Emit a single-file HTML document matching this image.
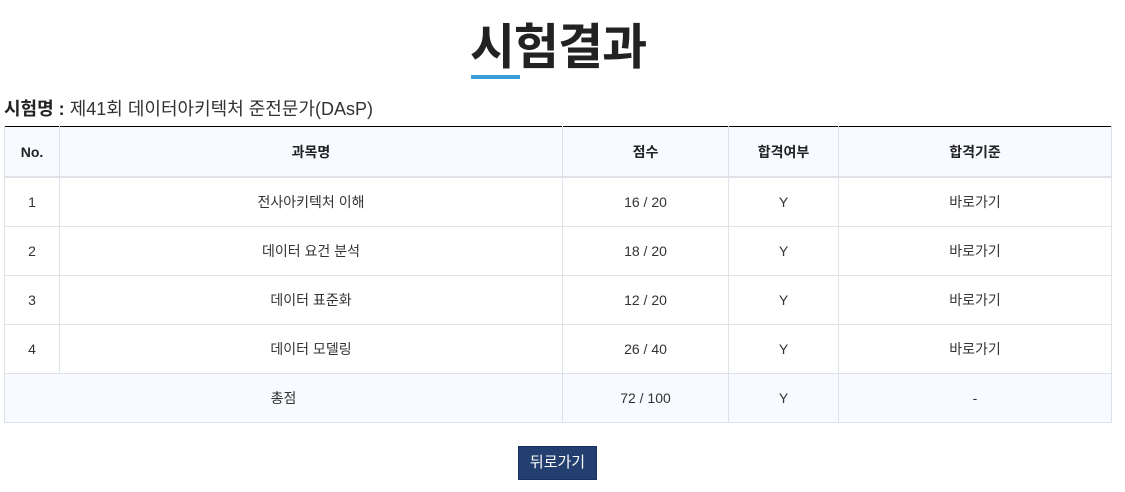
<!DOCTYPE html>
<html><head><meta charset="utf-8"><style>
body{margin:0;background:#fff;font-family:"Liberation Sans","Noto Sans CJK KR",sans-serif;color:#333;width:1125px;height:492px;overflow:hidden;position:relative}
h1{position:absolute;top:17px;left:0;width:1116px;text-align:center;margin:0;font-size:49px;font-weight:bold;color:#222;line-height:62px;letter-spacing:-1px}
.ul{position:absolute;left:471px;top:75px;width:49px;height:4px;background:#3a9fd8}
.sub{position:absolute;left:4px;top:97px;font-size:18px;color:#333;line-height:24px}
.sub b{color:#222}
table{position:absolute;left:4px;top:126px;width:1108px;border-collapse:collapse;font-size:14px;table-layout:fixed;border-top:1px solid #000}
td,th{border:1px solid #dfe2e6;text-align:center;height:48px;padding:0}
th{background:#f7faff;font-weight:bold;color:#222;height:49px;border-bottom:2px solid #dfe2e6;border-top:none}
tr.tot td{background:#f7faff}
.btn{position:absolute;left:518px;top:446px;width:77px;height:32px;background:#233f6f;border:1px solid #1a3060;color:#fff;font-size:15px;text-align:center;line-height:32px}
</style></head><body>
<h1>시험결과</h1><div class="ul"></div>
<div class="sub"><b>시험명 :</b> 제41회 데이터아키텍처 준전문가(DAsP)</div>
<table>
<colgroup><col style="width:55px"><col style="width:503px"><col style="width:166px"><col style="width:110px"><col></colgroup>
<tr><th>No.</th><th>과목명</th><th>점수</th><th>합격여부</th><th>합격기준</th></tr>
<tr><td>1</td><td>전사아키텍처 이해</td><td>16 / 20</td><td>Y</td><td>바로가기</td></tr>
<tr><td>2</td><td>데이터 요건 분석</td><td>18 / 20</td><td>Y</td><td>바로가기</td></tr>
<tr><td>3</td><td>데이터 표준화</td><td>12 / 20</td><td>Y</td><td>바로가기</td></tr>
<tr><td>4</td><td>데이터 모델링</td><td>26 / 40</td><td>Y</td><td>바로가기</td></tr>
<tr class="tot"><td colspan="2">총점</td><td>72 / 100</td><td>Y</td><td>-</td></tr>
</table>
<div class="btn">뒤로가기</div>
</body></html>
